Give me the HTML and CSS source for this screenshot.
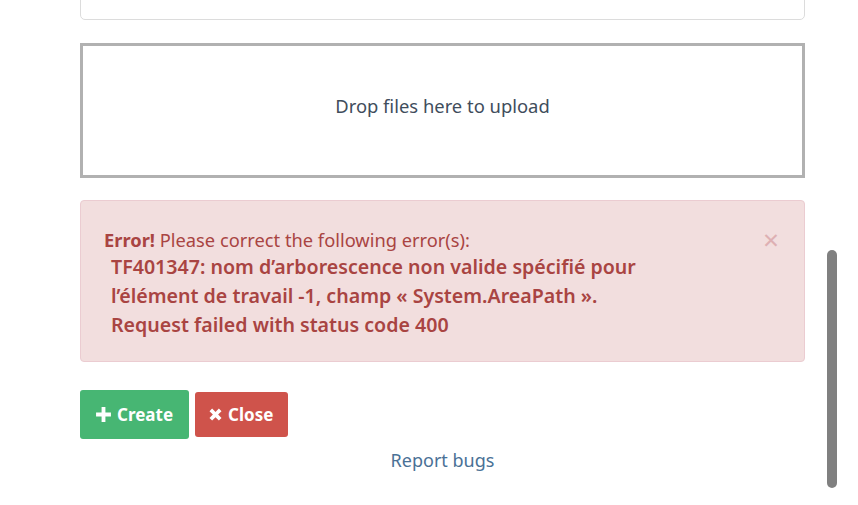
FILE: index.html
```html
<!DOCTYPE html>
<html lang="en">
<head>
<meta charset="utf-8">
<link rel="stylesheet" href="styles.css">
</head>
<body>
<div class="page">
  <div class="card-tail"></div>
  <div class="dropzone">Drop files here to upload</div>
  <div class="alert">
    <span class="alert-close">×</span>
    <div class="alert-head"><strong>Error!</strong> Please correct the following error(s):</div>
    <div class="alert-details">
      <div>TF401347: nom d’arborescence non valide spécifié pour<br>l’élément de travail -1, champ « System.AreaPath ».</div>
      <div>Request failed with status code 400</div>
    </div>
  </div>
  <div class="actions">
    <button class="btn btn-create"><svg class="ico" viewBox="0 0 16 16" width="17" height="17"><path d="M6.2 1h3.6v5.2H15v3.6H9.8V15H6.2V9.8H1V6.2h5.2z" fill="#fff"/></svg>Create</button>
    <button class="btn btn-close"><svg class="ico" viewBox="0 0 16 16" width="15" height="15"><path d="M1.6 4.4l2.8-2.8L8 5.2l3.6-3.6 2.8 2.8L10.8 8l3.6 3.6-2.8 2.8L8 10.8l-3.6 3.6-2.8-2.8L5.2 8z" fill="#fff"/></svg>Close</button>
  </div>
  <div class="footer"><a class="report" href="#">Report bugs</a></div>
</div>
<div class="scrollbar"></div>
</body>
</html>
```

FILE: styles.css
```css
html, body {
  margin: 0;
  padding: 0;
  background: #fff;
  height: 100%;
  overflow: hidden;
}
body {
  font-family: "Noto Sans", "Open Sans", sans-serif;
  color: #333;
}
.page {
  width: 725px;
  margin-left: 80px;
  display: flex;
  flex-direction: column;
}
.card-tail {
  height: 30px;
  margin-top: -10px;
  border: 1px solid #dcdcdc;
  border-radius: 5px;
  box-sizing: border-box;
}
.dropzone {
  margin-top: 23px;
  height: 135px;
  box-sizing: border-box;
  border: 3px solid #b1b1b1;
  padding-bottom: 10px;
  display: flex;
  align-items: center;
  justify-content: center;
  font-size: 18.4px;
  color: #3f4d5c;
}
.alert {
  position: relative;
  margin-top: 22px;
  height: 162px;
  box-sizing: border-box;
  background: #f2dede;
  border: 1px solid #ebccd1;
  border-radius: 4px;
  padding: 26px 23px 0 23px;
  color: #a94442;
}
.alert-close {
  position: absolute;
  right: 25px;
  top: 24px;
  font-size: 28px;
  line-height: 28px;
  color: #deb0b3;
}
.alert-head {
  font-size: 18.3px;
  line-height: 25px;
}
.alert-head strong { font-weight: 700; }
.alert-details {
  margin-left: 7px;
  font-size: 19.6px;
  font-weight: 600;
  line-height: 29px;
}
.actions {
  margin-top: 28px;
  display: flex;
  align-items: center;
  gap: 6px;
}
.btn {
  font-family: inherit;
  border: none;
  border-radius: 3px;
  color: #fff;
  font-size: 17px;
  font-weight: 700;
  display: flex;
  align-items: center;
  gap: 5px;
  cursor: pointer;
}
.btn-create {
  background: #47b673;
  height: 49px;
  padding: 0 16px 0 15px;
}
.btn-close {
  background: #cf534b;
  height: 45px;
  padding: 0 15px 0 13px;
}
.footer {
  margin-top: 9px;
  text-align: center;
}
.report {
  color: #4a7196;
  font-size: 18px;
  text-decoration: none;
}
.scrollbar {
  position: absolute;
  left: 827px;
  top: 250px;
  width: 10px;
  height: 238px;
  border-radius: 5px;
  background: #808080;
}
```
